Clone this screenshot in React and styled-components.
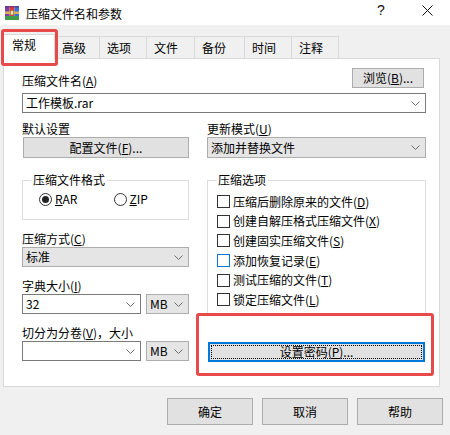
import React from "react";
import styled, { createGlobalStyle } from "styled-components";

const GlobalStyle = createGlobalStyle`
  html, body { margin: 0; padding: 0; background: #f0f0f0; }
  body {
    font-family: "Noto Sans CJK SC", "Microsoft YaHei", sans-serif;
    font-size: 12px;
    color: #000;
  }
  * { box-sizing: border-box; }
`;

const Window = styled.div`
  position: relative;
  width: 450px;
  height: 435px;
  background: #f0f0f0;
  display: flex;
  flex-direction: column;
  overflow: hidden;
`;

/* ---------- caption ---------- */
const TitleBar = styled.div`
  height: 25px;
  flex: none;
  background: #fff;
  display: flex;
  align-items: center;
  padding-left: 4px;
`;

const Title = styled.span`
  flex: 1;
  margin-left: 6px;
  font-size: 12px;
  line-height: 16px;
  padding-top: 2px;
`;

const CaptionButton = styled.div`
  width: 46px;
  height: 25px;
  display: flex;
  align-items: center;
  justify-content: center;
  font-family: "Liberation Sans", sans-serif;
  font-size: 14px;
  color: #111;
  padding-bottom: 5px;
`;

const AppIcon = () => (
  <svg width="16" height="16" viewBox="0 0 16 16">
    <rect x="1" y="1" width="4.5" height="10" fill="#7b3fa6" />
    <rect x="5.5" y="1" width="5" height="10" fill="#d93b3b" />
    <rect x="10.5" y="1" width="4.5" height="10" fill="#3b6fd6" />
    <rect x="1" y="11" width="14" height="4" fill="#3f9b4a" />
    <rect x="1" y="1" width="14" height="1.5" fill="#5a2c7e" opacity="0.6" />
    <rect x="1" y="6.5" width="14" height="2.5" fill="#d8b25a" />
    <rect x="6.5" y="5.5" width="3" height="4.5" fill="#f4e4b0" stroke="#8a6a20" strokeWidth="0.6" />
  </svg>
);

const CloseGlyph = () => (
  <svg width="11" height="11" viewBox="0 0 11 11">
    <path d="M0.5 0.5 L10.5 10.5 M10.5 0.5 L0.5 10.5" stroke="#111" strokeWidth="1" fill="none" />
  </svg>
);

/* ---------- tabs ---------- */
const TabStrip = styled.div`
  height: 33px;
  flex: none;
  display: flex;
  align-items: flex-end;
  padding-left: 3px;
`;

const Tab = styled.div`
  position: relative;
  width: ${(p) => p.$w}px;
  height: ${(p) => (p.$active ? 25 : 22)}px;
  margin-bottom: ${(p) => (p.$active ? -1 : 0)}px;
  z-index: ${(p) => (p.$active ? 2 : 1)};
  background: ${(p) => (p.$active ? "#fff" : "#f0f0f0")};
  border-top: 1px solid #d9d9d9;
  border-right: 1px solid #d9d9d9;
  border-left: ${(p) => (p.$active ? "1px solid #d9d9d9" : "none")};
  padding-left: ${(p) => (p.$active ? 8 : 7)}px;
  line-height: ${(p) => (p.$active ? 20 : 21)}px;
  font-size: 12px;
  white-space: nowrap;
`;

/* ---------- page ---------- */
const Panel = styled.div`
  position: relative;
  z-index: 1;
  margin-left: 3px;
  width: 437px;
  height: 329px;
  flex: none;
  background: #fff;
  border: 1px solid #d9d9d9;
  padding: 9px 13px 0 18px;
  display: flex;
  flex-direction: column;
`;

const TopRow = styled.div`
  height: 20px;
  display: flex;
  align-items: flex-end;
  justify-content: space-between;
`;

const Label = styled.div`
  line-height: ${(p) => p.$lh || 16}px;
  margin-top: ${(p) => p.$mt || 0}px;
  white-space: nowrap;
`;

const Mn = styled.u`
  text-decoration: underline;
  text-underline-offset: 1px;
`;

const Button = styled.button`
  position: relative;
  flex: none;
  font: inherit;
  font-size: 12px;
  line-height: 16px;
  color: #000;
  width: ${(p) => (p.$w ? `${p.$w}px` : "auto")};
  height: ${(p) => p.$h || 20}px;
  margin: ${(p) => p.$m || "0"};
  padding: 0;
  background: #e1e1e1;
  border: ${(p) => (p.$focused ? "2px solid #0078d7" : "1px solid #adadad")};
  display: flex;
  align-items: center;
  justify-content: center;
  cursor: default;

  &::after {
    content: "";
    display: ${(p) => (p.$focused ? "block" : "none")};
    position: absolute;
    inset: 1px;
    border: 1px dotted #000;
  }
`;

const Combo = styled.div`
  flex: ${(p) => (p.$grow ? "1 1 0" : "none")};
  width: ${(p) => (p.$w ? `${p.$w}px` : "auto")};
  height: ${(p) => p.$h || 20}px;
  margin-top: ${(p) => p.$mt || 0}px;
  border: 1px solid ${(p) => (p.$gray ? "#adadad" : "#7a7a7a")};
  background: ${(p) => (p.$gray ? "#e5e5e5" : "#fff")};
  display: flex;
  align-items: center;
  justify-content: space-between;
  padding: 0 5px 0 3px;
  line-height: 16px;
  white-space: nowrap;
`;

const Chevron = () => (
  <svg width="9" height="5" viewBox="0 0 9 5">
    <path d="M0.5 0.5 L4.5 4.5 L8.5 0.5" stroke="#6d6d6d" strokeWidth="1" fill="none" />
  </svg>
);

const Columns = styled.div`
  display: grid;
  grid-template-columns: 167px 219px;
  column-gap: 18px;
  margin-top: 8px;
`;

const Column = styled.div`
  display: flex;
  flex-direction: column;
`;

const Group = styled.fieldset`
  flex: none;
  margin: ${(p) => p.$mt || 0}px 0 0 0;
  padding: 0;
  height: ${(p) => p.$h}px;
  border: 1px solid #dcdcdc;
  min-width: 0;
`;

const Legend = styled.legend`
  margin-left: 8px;
  padding: 0 2px;
  line-height: 14px;
  font-size: 12px;
`;

const RadioRow = styled.div`
  display: flex;
  margin-top: 4px;
  padding-left: 16px;
  height: 16px;
  align-items: center;
`;

const RadioItem = styled.label`
  width: 94px;
  display: flex;
  align-items: center;
  gap: 3px;
  line-height: 16px;
`;

const RadioDot = styled.span`
  width: 13px;
  height: 13px;
  border-radius: 50%;
  border: 1px solid #333;
  background: #fff;
  display: flex;
  align-items: center;
  justify-content: center;

  &::before {
    content: "";
    width: 7px;
    height: 7px;
    border-radius: 50%;
    background: ${(p) => (p.$on ? "#222" : "transparent")};
  }
`;

const CheckList = styled.div`
  padding: 5px 0 0 9px;
  display: flex;
  flex-direction: column;
`;

const CheckRow = styled.label`
  height: 19.6px;
  display: flex;
  align-items: center;
  gap: 3px;
  line-height: 16px;
  white-space: nowrap;
`;

const CheckBox = styled.span`
  flex: none;
  width: 13px;
  height: 13px;
  border: 1px solid ${(p) => (p.$hover ? "#0078d7" : "#333")};
  background: #fff;
`;

const SizeRow = styled.div`
  display: flex;
  gap: 5px;
`;

const ButtonRow = styled.div`
  flex: none;
  display: flex;
  justify-content: flex-end;
  gap: 9px;
  padding: 11px 7px 0 0;
`;

/* red markers drawn over the dialog */
const Marker = styled.div`
  position: absolute;
  z-index: 5;
  left: ${(p) => p.$x}px;
  top: ${(p) => p.$y}px;
  width: ${(p) => p.$w}px;
  height: ${(p) => p.$h}px;
  border: 3px solid #e8494b;
  border-radius: 3px;
  pointer-events: none;
`;

const tabs = [
  { name: "常规", w: 52 },
  { name: "高级", w: 45 },
  { name: "选项", w: 47 },
  { name: "文件", w: 48 },
  { name: "备份", w: 50 },
  { name: "时间", w: 47 },
  { name: "注释", w: 47 },
];

const options = [
  { text: "压缩后删除原来的文件", key: "D" },
  { text: "创建自解压格式压缩文件", key: "X" },
  { text: "创建固实压缩文件", key: "S" },
  { text: "添加恢复记录", key: "E", hover: true },
  { text: "测试压缩的文件", key: "T" },
  { text: "锁定压缩文件", key: "L" },
];

export default function App() {
  return (
    <>
      <GlobalStyle />
      <Window>
        <TitleBar>
          <AppIcon />
          <Title>压缩文件名和参数</Title>
          <CaptionButton>?</CaptionButton>
          <CaptionButton>
            <CloseGlyph />
          </CaptionButton>
        </TitleBar>

        <TabStrip>
          {tabs.map((t, i) => (
            <Tab key={t.name} $w={t.w} $active={i === 0}>
              {t.name}
            </Tab>
          ))}
        </TabStrip>

        <Panel>
          <TopRow>
            <Label $lh={14}>
              压缩文件名(<Mn>A</Mn>)
            </Label>
            <Button $w={72} $h={20} $m="0 2px 0 0">
              浏览(<Mn>B</Mn>)...
            </Button>
          </TopRow>
          <Combo $mt={5}>
            <span>工作模板.rar</span>
            <Chevron />
          </Combo>

          <Columns>
            <Column>
              <Label>默认设置</Label>
              <Button $h={21} $m="0 0 0 1px">
                配置文件(<Mn>F</Mn>)...
              </Button>

              <Group $mt={15} $h={47}>
                <Legend>压缩文件格式</Legend>
                <RadioRow>
                  <RadioItem>
                    <RadioDot $on />
                    <span>
                      <Mn>R</Mn>AR
                    </span>
                  </RadioItem>
                  <RadioItem>
                    <RadioDot />
                    <span>
                      <Mn>Z</Mn>IP
                    </span>
                  </RadioItem>
                </RadioRow>
              </Group>

              <Label $mt={11}>
                压缩方式(<Mn>C</Mn>)
              </Label>
              <Combo $gray>
                <span>标准</span>
                <Chevron />
              </Combo>

              <Label $mt={11}>
                字典大小(<Mn>I</Mn>)
              </Label>
              <SizeRow>
                <Combo $grow>
                  <span>32</span>
                  <Chevron />
                </Combo>
                <Combo $gray $w={43}>
                  <span>MB</span>
                  <Chevron />
                </Combo>
              </SizeRow>

              <Label $mt={11}>
                切分为分卷(<Mn>V</Mn>)，大小
              </Label>
              <SizeRow>
                <Combo $grow>
                  <span />
                  <Chevron />
                </Combo>
                <Combo $gray $w={43}>
                  <span>MB</span>
                  <Chevron />
                </Combo>
              </SizeRow>
            </Column>

            <Column>
              <Label>
                更新模式(<Mn>U</Mn>)
              </Label>
              <Combo $gray $h={21}>
                <span>添加并替换文件</span>
                <Chevron />
              </Combo>

              <Group $mt={15} $h={142}>
                <Legend>压缩选项</Legend>
                <CheckList>
                  {options.map((o) => (
                    <CheckRow key={o.key}>
                      <CheckBox $hover={o.hover} />
                      <span>
                        {o.text}(<Mn>{o.key}</Mn>)
                      </span>
                    </CheckRow>
                  ))}
                </CheckList>
              </Group>

              <Button $focused $h={20} $m="27px 1px 0 1px">
                设置密码(<Mn>P</Mn>)...
              </Button>
            </Column>
          </Columns>
        </Panel>

        <ButtonRow>
          <Button $w={86} $h={27}>确定</Button>
          <Button $w={86} $h={27}>取消</Button>
          <Button $w={86} $h={27}>帮助</Button>
        </ButtonRow>

        <Marker $x={1} $y={29} $w={57} $h={37} />
        <Marker $x={196} $y={313} $w={238} $h={63} />
      </Window>
    </>
  );
}
